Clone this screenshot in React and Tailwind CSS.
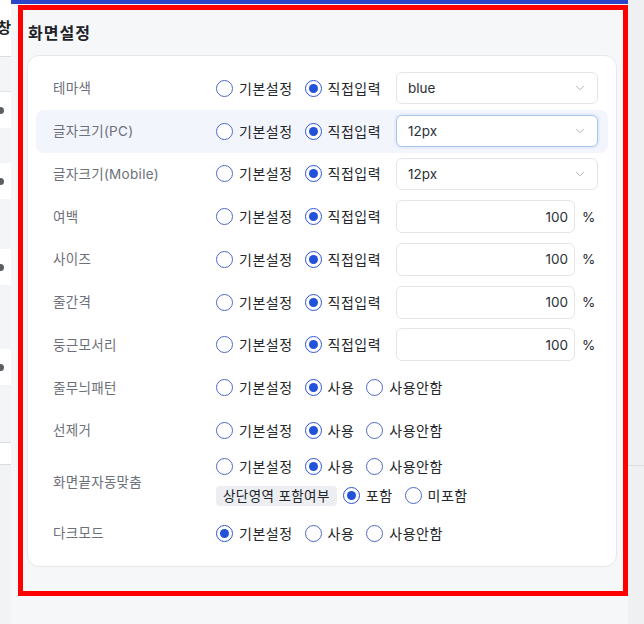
import React from "react";
import { ChevronDown } from "lucide-react";

const rows = [
  { label: "테마색", type: "select", value: "blue" },
  { label: "글자크기(PC)", type: "select", value: "12px", active: true },
  { label: "글자크기(Mobile)", type: "select", value: "12px" },
  { label: "여백", type: "pct" },
  { label: "사이즈", type: "pct" },
  { label: "줄간격", type: "pct" },
  { label: "둥근모서리", type: "pct" },
  { label: "줄무늬패턴", type: "use", checked: 1 },
  { label: "선제거", type: "use", checked: 1 },
  { label: "화면끝자동맞춤", type: "fit" },
  { label: "다크모드", type: "use", checked: 0 },
];

function Radio({ checked, children }) {
  return (
    <label className="flex items-center gap-[6px] shrink-0">
      <span
        className={
          checked
            ? "w-[17px] h-[17px] rounded-full border-[1.5px] border-[#2d55d6] flex items-center justify-center bg-white"
            : "w-[17px] h-[17px] rounded-full border-[1.5px] border-[#4f69c6] bg-white"
        }
      >
        {checked && <span className="w-[9px] h-[9px] rounded-full bg-[#2251da]" />}
      </span>
      <span className="text-[14px] tracking-[0.5px] text-[#23262b] whitespace-nowrap">{children}</span>
    </label>
  );
}

function Options({ items, checked }) {
  return (
    <div className="flex items-center gap-[12px]">
      {items.map((t, i) => (
        <Radio key={t} checked={i === checked}>
          {t}
        </Radio>
      ))}
    </div>
  );
}

function Select({ value, focused }) {
  return (
    <div
      className={
        focused
          ? "ml-[15px] w-[202px] h-[32px] rounded-[6px] border border-[#a9c3ea] bg-white shadow-[0_0_0_2px_rgba(120,160,230,0.10)] flex items-center justify-between pl-[11px] pr-[10px]"
          : "ml-[15px] w-[202px] h-[32px] rounded-[6px] border border-[#e3e5e9] bg-white flex items-center justify-between pl-[11px] pr-[10px]"
      }
    >
      <span className="text-[13.5px] text-[#2b2f38]">{value}</span>
      <ChevronDown size={14} strokeWidth={1.4} className="text-[#9aa0a8]" />
    </div>
  );
}

function Percent() {
  return (
    <div className="ml-[15px] flex items-center">
      <div className="w-[179px] h-[33px] rounded-[6px] border border-[#e3e5e9] bg-white flex items-center justify-end pr-[6px]">
        <span className="text-[13.5px] text-[#2b2f38]">100</span>
      </div>
      <span className="ml-[7px] text-[13.5px] text-[#23262b]">%</span>
    </div>
  );
}

function Label({ children }) {
  return (
    <div className="w-[163px] shrink-0 text-[13.5px] tracking-[0.3px] text-[#6c7079] whitespace-nowrap">{children}</div>
  );
}

function Row({ row }) {
  const base = row.active
    ? "flex items-center h-[42.75px] pl-[17px] pr-[9px] rounded-[8px] bg-[#f3f5fd]"
    : "flex items-center h-[42.75px] pl-[17px] pr-[9px] rounded-[8px]";

  if (row.type === "fit") {
    return (
      <div className="flex items-center h-[60px] pl-[17px] pr-[9px]">
        <Label>{row.label}</Label>
        <div className="flex flex-col">
          <div className="h-[28px] flex items-center">
            <Options items={["기본설정", "사용", "사용안함"]} checked={1} />
          </div>
          <div className="h-[30px] flex items-center gap-[6px]">
            <span className="h-[20px] px-[7px] rounded-[4px] bg-[#eceef1] text-[13.5px] tracking-[0.4px] text-[#23262b] flex items-center whitespace-nowrap">
              상단영역 포함여부
            </span>
            <Options items={["포함", "미포함"]} checked={0} />
          </div>
        </div>
      </div>
    );
  }

  return (
    <div className={base}>
      <Label>{row.label}</Label>
      {row.type === "select" && (
        <>
          <Options items={["기본설정", "직접입력"]} checked={1} />
          <Select value={row.value} focused={row.active} />
        </>
      )}
      {row.type === "pct" && (
        <>
          <Options items={["기본설정", "직접입력"]} checked={1} />
          <Percent />
        </>
      )}
      {row.type === "use" && <Options items={["기본설정", "사용", "사용안함"]} checked={row.checked} />}
    </div>
  );
}

export default function App() {
  return (
    <div className="w-[644px] h-[624px] overflow-hidden flex bg-[#eff0f1] [font-family:Inter,'Noto_Sans_CJK_KR',sans-serif]">
      {/* page behind the drawer */}
      <div className="w-[11px] shrink-0 bg-white flex flex-col overflow-hidden">
        <div className="h-[57px] flex justify-end items-start pt-[20px] overflow-hidden border-b border-[#dcdde0]">
          <span className="text-[15px] font-bold text-[#222] leading-none whitespace-nowrap">창</span>
        </div>
        <div className="h-[35px] bg-[#f4f5f6] border-b border-[#e3e4e6]" />
        <div className="h-[36px] flex items-center"><span className="w-[4px] h-[7px] rounded-r-full bg-[#5b5e63]" /></div>
        <div className="h-[35px] bg-[#f4f5f6]" />
        <div className="h-[36px] flex items-center"><span className="w-[4px] h-[7px] rounded-r-full bg-[#5b5e63]" /></div>
        <div className="h-[50px] bg-[#f4f5f6]" />
        <div className="h-[36px] flex items-center"><span className="w-[4px] h-[7px] rounded-r-full bg-[#5b5e63]" /></div>
        <div className="h-[64px] bg-[#f4f5f6]" />
        <div className="h-[36px] flex items-center"><span className="w-[4px] h-[7px] rounded-r-full bg-[#5b5e63]" /></div>
        <div className="h-[58px] bg-[#f4f5f6] border-b border-[#dcdde0]" />
        <div className="h-[22px] border-b border-[#dcdde0]" />
        <div className="flex-1 bg-[#f2f3f4]" />
      </div>

      {/* settings drawer */}
      <div className="w-[617px] shrink-0 bg-[#f6f7f9] flex flex-col">
        <div className="h-[4px] bg-[#2a45c8]" />
        <div className="pl-[7px] pt-[1px]">
          <section className="w-[610px] h-[591px] border-[5px] border-[#ff0000] pt-[12px] pl-[4px] pr-[6px]">
            <h2 className="h-[22px] leading-[22px] pl-[1px] text-[16px] tracking-[1px] font-bold text-[#1f2227]">화면설정</h2>
            <div className="mt-[11px] rounded-[12px] border border-[#e5e7eb] bg-white px-[8px] pt-[11px] pb-[11px]">
              {rows.map((r) => (
                <Row key={r.label} row={r} />
              ))}
            </div>
          </section>
        </div>
      </div>

      <div className="flex-1 flex flex-col">
        <div className="h-[465px]" />
        <div className="h-[1px] bg-[#dcdde0]" />
      </div>
    </div>
  );
}
